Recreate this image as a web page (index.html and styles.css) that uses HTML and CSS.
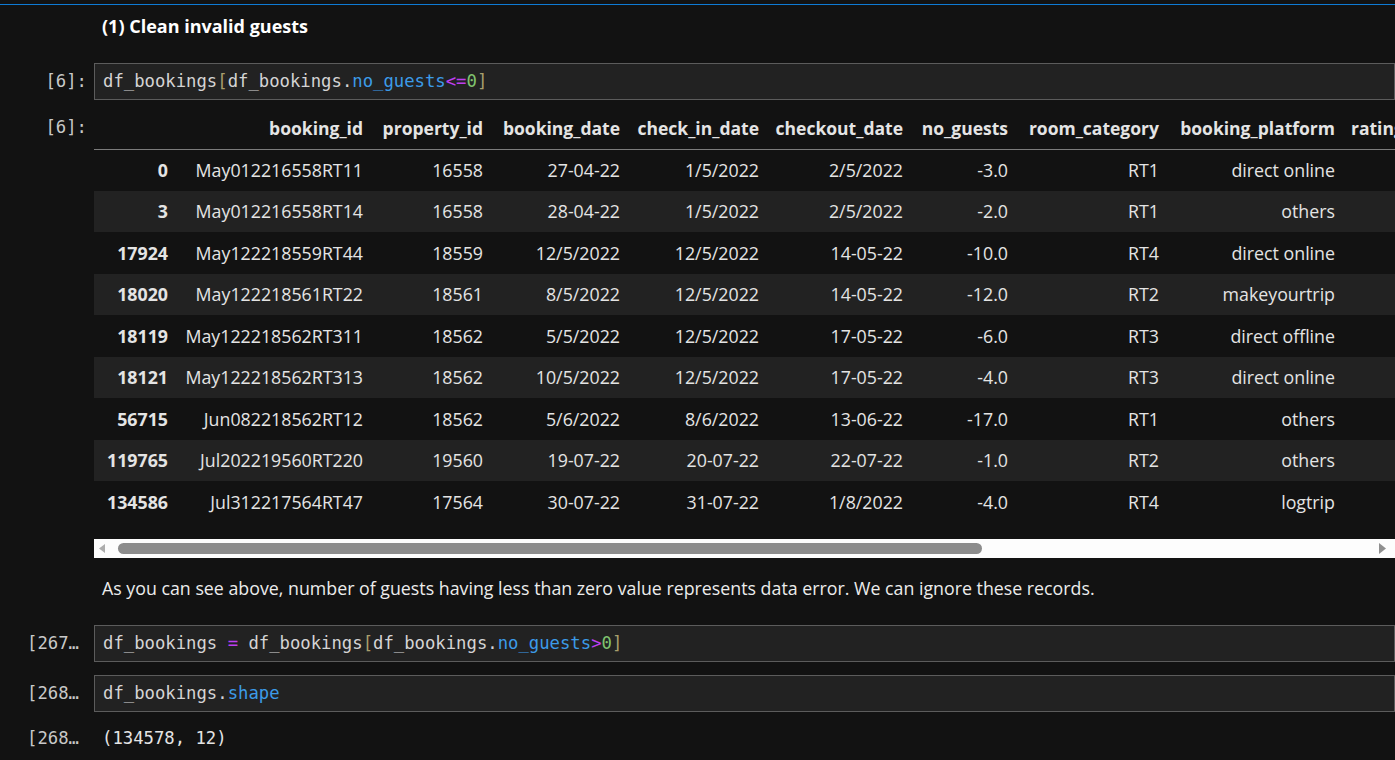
FILE: index.html
```html
<!DOCTYPE html>
<html>
<head>
<meta charset="utf-8">
<link rel="stylesheet" href="styles.css">
</head>
<body>
<div class="topline"></div>
<div class="nb">
  <div class="cell md-head">
    <div class="prompt"></div>
    <div class="md"><h3>(1) Clean invalid guests</h3></div>
  </div>

  <div class="cell code first">
    <div class="prompt">[6]:</div>
    <div class="editor">df_bookings<span class="br">[</span>df_bookings.<span class="attr">no_guests</span><span class="op">&lt;=</span><span class="num">0</span><span class="br">]</span></div>
  </div>

  <div class="cell out-table">
    <div class="prompt out-prompt">[6]:</div>
    <div class="output">
      <div class="table-wrap">
        <table class="df">
          <colgroup>
            <col class="c-idx"><col class="c-bid"><col class="c-pid"><col class="c-bd"><col class="c-ci"><col class="c-co"><col class="c-ng"><col class="c-rc"><col class="c-bp"><col class="c-rg"><col class="c-bs"><col class="c-rv"><col class="c-rr">
          </colgroup>
          <thead>
            <tr><th></th><th>booking_id</th><th>property_id</th><th>booking_date</th><th>check_in_date</th><th>checkout_date</th><th>no_guests</th><th>room_category</th><th>booking_platform</th><th class="left">ratings_given</th><th>booking_status</th><th>revenue_generated</th><th>revenue_realized</th></tr>
          </thead>
          <tbody>
            <tr><th>0</th><td>May012216558RT11</td><td>16558</td><td>27-04-22</td><td>1/5/2022</td><td>2/5/2022</td><td>-3.0</td><td>RT1</td><td>direct online</td><td>1.0</td><td>Checked Out</td><td>10010</td><td>10010</td></tr>
            <tr><th>3</th><td>May012216558RT14</td><td>16558</td><td>28-04-22</td><td>1/5/2022</td><td>2/5/2022</td><td>-2.0</td><td>RT1</td><td>others</td><td>NaN</td><td>Cancelled</td><td>9100</td><td>3640</td></tr>
            <tr><th>17924</th><td>May122218559RT44</td><td>18559</td><td>12/5/2022</td><td>12/5/2022</td><td>14-05-22</td><td>-10.0</td><td>RT4</td><td>direct online</td><td>NaN</td><td>No Show</td><td>20900</td><td>20900</td></tr>
            <tr><th>18020</th><td>May122218561RT22</td><td>18561</td><td>8/5/2022</td><td>12/5/2022</td><td>14-05-22</td><td>-12.0</td><td>RT2</td><td>makeyourtrip</td><td>NaN</td><td>Cancelled</td><td>9000</td><td>3600</td></tr>
            <tr><th>18119</th><td>May122218562RT311</td><td>18562</td><td>5/5/2022</td><td>12/5/2022</td><td>17-05-22</td><td>-6.0</td><td>RT3</td><td>direct offline</td><td>5.0</td><td>Checked Out</td><td>16800</td><td>16800</td></tr>
            <tr><th>18121</th><td>May122218562RT313</td><td>18562</td><td>10/5/2022</td><td>12/5/2022</td><td>17-05-22</td><td>-4.0</td><td>RT3</td><td>direct online</td><td>NaN</td><td>Cancelled</td><td>14400</td><td>5760</td></tr>
            <tr><th>56715</th><td>Jun082218562RT12</td><td>18562</td><td>5/6/2022</td><td>8/6/2022</td><td>13-06-22</td><td>-17.0</td><td>RT1</td><td>others</td><td>NaN</td><td>Checked Out</td><td>6500</td><td>6500</td></tr>
            <tr><th>119765</th><td>Jul202219560RT220</td><td>19560</td><td>19-07-22</td><td>20-07-22</td><td>22-07-22</td><td>-1.0</td><td>RT2</td><td>others</td><td>NaN</td><td>Checked Out</td><td>13500</td><td>13500</td></tr>
            <tr><th>134586</th><td>Jul312217564RT47</td><td>17564</td><td>30-07-22</td><td>31-07-22</td><td>1/8/2022</td><td>-4.0</td><td>RT4</td><td>logtrip</td><td>2.0</td><td>Checked Out</td><td>38760</td><td>38760</td></tr>
          </tbody>
        </table>
      </div>
      <div class="hscroll">
        <svg class="arrow-l" width="6" height="9" viewBox="0 0 6 9"><path d="M6 0 L6 9 L0 4.5 Z" fill="#adadad"/></svg>
        <div class="thumb"></div>
        <svg class="arrow-r" width="7" height="11" viewBox="0 0 7 11"><path d="M0 0 L0 11 L7 5.5 Z" fill="#8f8f8f"/></svg>
      </div>
    </div>
  </div>

  <div class="cell md-para">
    <div class="prompt"></div>
    <div class="md"><p>As you can see above, number of guests having less than zero value represents data error. We can ignore these records.</p></div>
  </div>

  <div class="cell code second">
    <div class="prompt">[267]:</div>
    <div class="editor">df_bookings <span class="op">=</span> df_bookings<span class="br">[</span>df_bookings.<span class="attr">no_guests</span><span class="op">&gt;</span><span class="num">0</span><span class="br">]</span></div>
  </div>

  <div class="cell code third">
    <div class="prompt">[268]:</div>
    <div class="editor">df_bookings.<span class="attr">shape</span></div>
  </div>

  <div class="cell out-text">
    <div class="prompt">[268]:</div>
    <div class="plain">(134578, 12)</div>
  </div>
</div>
</body>
</html>
```

FILE: styles.css
```css
html, body {
  margin: 0;
  padding: 0;
  background: #121212;
  overflow: hidden;
}

body {
  width: 1395px;
  height: 760px;
  color: #e2e2e2;
  font-family: "Segoe UI", "Open Sans", "Noto Sans", sans-serif;
}

.topline {
  margin-top: 4px;
  height: 1px;
  background: #0e7ad4;
}

.cell {
  display: grid;
  grid-template-columns: 94px 1301px;
}

.prompt {
  box-sizing: border-box;
  padding-left: 27px;
  padding-right: 7px;
  font-family: "DejaVu Sans Mono", "Liberation Mono", monospace;
  font-size: 17.25px;
  color: #c8c8c8;
  text-align: right;
  white-space: nowrap;
  overflow: hidden;
  text-overflow: ellipsis;
}

/* markdown */
.md {
  padding-left: 8px;
}
.md h3 {
  margin: 0;
  font-size: 18px;
  line-height: 24px;
  font-weight: 700;
  color: #ffffff;
}
.md p {
  margin: 0;
  font-size: 17.8px;
  line-height: 24px;
  color: #ececec;
  white-space: nowrap;
}
.md-head { margin-top: 9px; }
.md-para { margin-top: 18px; }

/* code cells */
.code .prompt {
  padding-top: 6px;
  line-height: 25px;
}
.editor {
  background: #222222;
  border: 1px solid #5c5c5c;
  padding: 5px 8px;
  font-family: "DejaVu Sans Mono", "Liberation Mono", monospace;
  font-size: 17.25px;
  line-height: 25px;
  color: #d4d4d4;
  white-space: pre;
  overflow: hidden;
}
.first { margin-top: 25px; }
.second { margin-top: 25px; }
.third { margin-top: 13px; }

.br { color: #a89e6c; }
.attr { color: #3c9be8; }
.op { color: #bd3ef0; }
.num { color: #80c46f; }

/* output table */
.out-table { margin-top: 8px; }
.out-prompt { line-height: 38px; }

.table-wrap {
  width: 1301px;
  overflow: hidden;
}

.df {
  table-layout: fixed;
  width: 1889px;
  border-collapse: collapse;
  border-spacing: 0;
  font-size: 17.8px;
  color: #e4e4e4;
}
.df th, .df td {
  padding: 0 8px;
  text-align: right;
  white-space: nowrap;
}
.df thead tr {
  height: 41px;
}
.df thead th {
  font-weight: 700;
  font-size: 17.5px;
  border-bottom: 1px solid #7b7b7b;
}
.df thead th.left {
  text-align: left;
}
.df tbody tr {
  height: 41.5px;
}
.df tbody th {
  font-weight: 700;
}
.df tbody tr:nth-child(even) {
  background: #222222;
}

.c-idx { width: 82px; }
.c-bid { width: 195px; }
.c-pid { width: 120px; }
.c-bd { width: 137px; }
.c-ci { width: 139px; }
.c-co { width: 144px; }
.c-ng { width: 105px; }
.c-rc { width: 151px; }
.c-bp { width: 176px; }
.c-rg { width: 140px; }
.c-bs { width: 150px; }
.c-rv { width: 180px; }
.c-rr { width: 170px; }

.hscroll {
  margin-top: 16.5px;
  height: 19px;
  width: 1301px;
  background: #fdfdfd;
  display: flex;
  align-items: center;
}
.arrow-l {
  margin-left: 5px;
}
.thumb {
  margin-left: 13px;
  width: 864px;
  height: 11px;
  border-radius: 6px;
  background: #8c8c8c;
}
.arrow-r {
  margin-left: auto;
  margin-right: 9px;
}

/* plain output */
.out-text { margin-top: 14px; }
.out-text .prompt { line-height: 24px; }
.plain {
  padding-left: 8px;
  font-family: "DejaVu Sans Mono", "Liberation Mono", monospace;
  font-size: 17.25px;
  line-height: 24px;
  color: #e4e4e4;
  white-space: pre;
}
```
